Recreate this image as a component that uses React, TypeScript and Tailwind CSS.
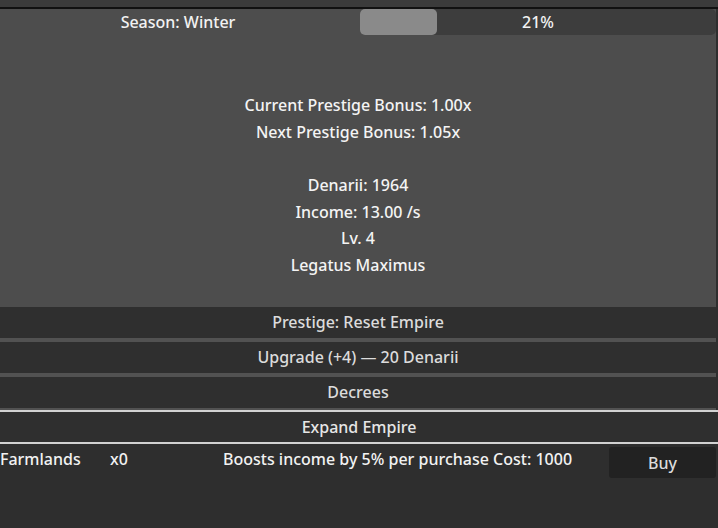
import React from "react";

const stats = [
  "Current Prestige Bonus: 1.00x",
  "Next Prestige Bonus: 1.05x",
  "",
  "Denarii: 1964",
  "Income: 13.00 /s",
  "Lv. 4",
  "Legatus Maximus",
];

const actions = ["Prestige: Reset Empire", "Upgrade (+4) — 20 Denarii", "Decrees"];

const App = () => {
  const progress = 21;

  return (
    <div className="w-[718px] h-[528px] overflow-hidden bg-[#2e2e2e] font-['Noto_Sans',sans-serif] text-base font-medium">
      <div className="h-[9px] bg-[#3b3b3b] border-b-2 border-[#111]" />
      <div className="bg-[#4d4d4d] w-[716px]">
        <div className="grid grid-cols-2 gap-1 h-[26px]">
          <div className="flex items-center justify-center text-[#f2f2f2]">Season: Winter</div>
          <div className="relative bg-[#3d3d3d] rounded-[5px] flex items-center justify-center">
            <div className="absolute left-0 top-0 bottom-0 w-[77px] bg-[#8a8a8a] rounded-[5px]" />
            <span className="relative text-[#f2f2f2]">{progress}%</span>
          </div>
        </div>
        <div className="pt-[57px] pb-[28px] text-center text-[#f4f4f4] leading-[26.67px]">
          {stats.map((line, i) => (
            <div key={i} className="h-[26.67px]">
              {line}
            </div>
          ))}
        </div>
      </div>
      <div className="bg-[#525252] w-[716px] flex flex-col gap-1 pb-[2px]">
        {actions.map((label) => (
          <button
            key={label}
            className="h-[31px] w-full bg-[#2f2f2f] text-[#dcdcdc] flex items-center justify-center"
          >
            {label}
          </button>
        ))}
      </div>
      <button className="-ml-[2px] w-[722px] h-[34px] border-2 border-[#d2d2d2] bg-[#2f2f2f] text-[#e6e6e6] flex items-center justify-center">
        Expand Empire
      </button>
      <div className="mt-[3px] h-[31px] w-[716px] flex items-start text-[#f2f2f2]">
        <span className="w-[110px] leading-[24px]">Farmlands</span>
        <span className="w-[113px] leading-[24px]">x0</span>
        <span className="w-[386px] leading-[24px]">Boosts income by 5% per purchase Cost: 1000</span>
        <button className="w-[107px] h-[31px] bg-[#222222] rounded-[3px] text-[#dcdcdc] pt-[1px]">
          Buy
        </button>
      </div>
    </div>
  );
};

export default App;
